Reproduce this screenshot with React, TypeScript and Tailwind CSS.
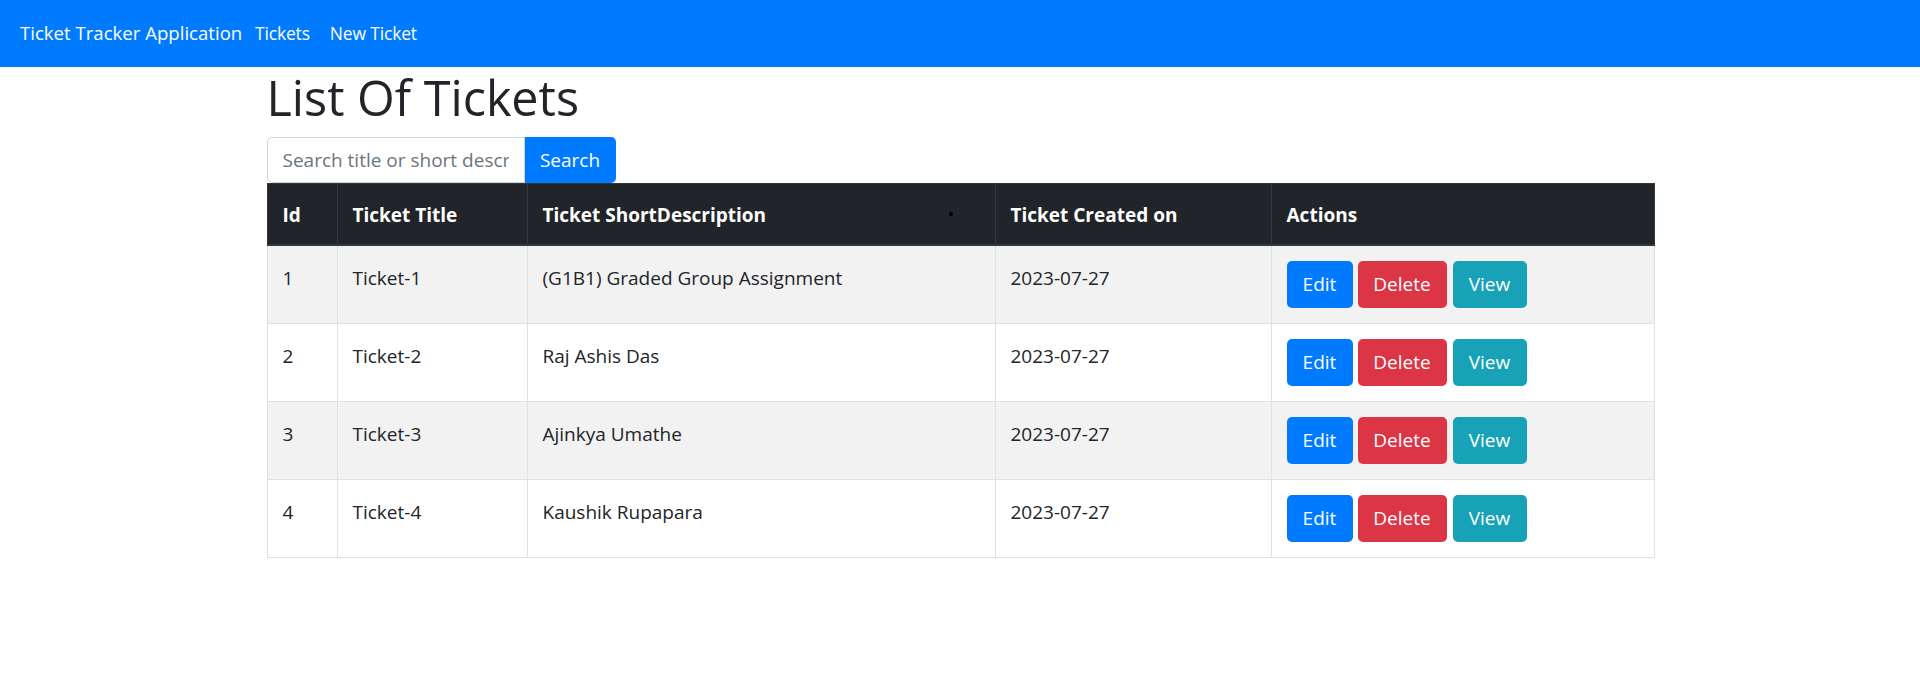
import React from "react";

const tickets = [
  { id: 1, title: "Ticket-1", desc: "(G1B1) Graded Group Assignment", created: "2023-07-27" },
  { id: 2, title: "Ticket-2", desc: "Raj Ashis Das", created: "2023-07-27" },
  { id: 3, title: "Ticket-3", desc: "Ajinkya Umathe", created: "2023-07-27" },
  { id: 4, title: "Ticket-4", desc: "Kaushik Rupapara", created: "2023-07-27" },
];

const headers = [
  { label: "Id", w: "w-[70px]" },
  { label: "Ticket Title", w: "w-[190px]" },
  { label: "Ticket ShortDescription", w: "w-[468px]" },
  { label: "Ticket Created on", w: "w-[276px]" },
  { label: "Actions", w: "w-[383px]" },
];

const cell = "border border-[#dee2e6] px-[15px] pt-[17px] pb-[13px] align-top leading-[30px]";

export default function App() {
  return (
    <div className="relative min-h-[680px] bg-white font-['Open_Sans','Noto_Sans',sans-serif] text-[#212529]">
      <nav className="flex h-[67px] items-center bg-[#007bff] px-[20px] pb-[2px] text-white">
        <a href="#" className="w-[225px] whitespace-nowrap text-[18.6px] leading-[30px]">
          Ticket Tracker Application
        </a>
        <a href="#" className="px-[10px] text-[17.5px] tracking-[-0.01em] leading-[30px]">
          Tickets
        </a>
        <a href="#" className="px-[10px] text-[17.5px] tracking-[-0.01em] leading-[30px]">
          New Ticket
        </a>
      </nav>

      <div className="mx-auto w-[1387px]">
        <h1 className="mb-[10px] text-[48.5px] font-normal leading-[60px]">List Of Tickets</h1>

        <div className="flex h-[46px]">
          <input
            type="text"
            placeholder="Search title or short description"
            className="w-[258px] rounded-l-[5px] border border-[#ced4da] bg-white px-[15px] text-[19px] outline-none placeholder:text-[#6c757d]"
          />
          <button className="w-[91px] rounded-r-[5px] bg-[#007bff] text-[19px] text-white">
            Search
          </button>
        </div>

        <table className="w-full table-fixed border-collapse border border-[#dee2e6] text-[19px]">
          <thead>
            <tr className="bg-[#212529] text-white">
              {headers.map((h) => (
                <th
                  key={h.label}
                  className={`${h.w} border border-b-[2.5px] border-[#32383e] px-[15px] pt-[16px] pb-[14px] text-left align-top font-bold leading-[30px]`}
                >
                  {h.label}
                </th>
              ))}
            </tr>
          </thead>
          <tbody>
            {tickets.map((t, i) => (
              <tr key={t.id} className={i % 2 === 0 ? "bg-[#f2f2f2]" : "bg-white"}>
                <td className={cell}>{t.id}</td>
                <td className={cell}>{t.title}</td>
                <td className={cell}>{t.desc}</td>
                <td className={cell}>{t.created}</td>
                <td className="border border-[#dee2e6] p-[15px] align-top">
                  <div className="flex h-[47px]">
                    <button className="w-[66px] rounded-[5px] bg-[#007bff] text-white">Edit</button>
                    <button className="ml-[5px] w-[89px] rounded-[5px] bg-[#dc3545] text-white">
                      Delete
                    </button>
                    <button className="ml-[6px] w-[74px] rounded-[5px] bg-[#17a2b8] text-white">
                      View
                    </button>
                  </div>
                </td>
              </tr>
            ))}
          </tbody>
        </table>
      </div>

      <span className="absolute left-[949px] top-[212px] h-[4px] w-[4px] rounded-full bg-black" />
    </div>
  );
}
